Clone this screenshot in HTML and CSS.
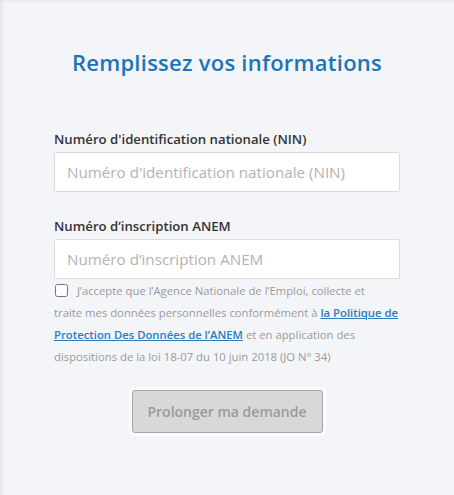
FILE: index.html
```html
<!DOCTYPE html>
<html lang="fr">
<head>
<meta charset="utf-8">
<title>Remplissez vos informations</title>
<link rel="stylesheet" href="styles.css">
</head>
<body>
<div class="page">
  <h1 class="title">Remplissez vos informations</h1>
  <form class="form">
    <div class="field">
      <label class="label" for="nin">Numéro d'identification nationale (NIN)</label>
      <input class="input" id="nin" type="text" placeholder="Numéro d'identification nationale (NIN)">
    </div>
    <div class="field">
      <label class="label" for="anem">Numéro d’inscription ANEM</label>
      <input class="input" id="anem" type="text" placeholder="Numéro d’inscription ANEM">
    </div>
    <p class="consent"><input class="check" type="checkbox"> J’accepte que l’Agence Nationale de l’Emploi, collecte et<br>traite mes données personnelles conformément à <a class="link" href="#">la Politique de<br>Protection Des Données de l’ANEM</a> et en application des<br>dispositions de la loi 18-07 du 10 juin 2018 (JO N° 34)</p>
    <div class="actions">
      <button class="btn" type="button" disabled>Prolonger ma demande</button>
    </div>
  </form>
</div>
</body>
</html>
```
FILE: styles.css
```css
html, body {
  margin: 0;
  padding: 0;
  height: 100%;
}
body {
  background: #f4f5f9;
  font-family: "Open Sans", "Noto Sans", sans-serif;
}
.page {
  min-height: 100%;
  box-sizing: border-box;
  padding: 40px 54px 0 54px;
  box-shadow: inset 4px 3px 4px -2px rgba(0,0,0,0.08);
}
.title {
  margin: 0;
  text-align: center;
  font-size: 22px;
  font-weight: 600;
  color: #1b74b9;
  line-height: 44px;
  letter-spacing: 0.25px;
}
.form {
  margin-top: 46px;
}
.field {
  display: flex;
  flex-direction: column;
  margin-bottom: 25px;
}
.label {
  font-size: 13.2px;
  font-weight: 600;
  color: #333;
  line-height: 18px;
  margin-bottom: 4px;
}
.input {
  height: 40px;
  box-sizing: border-box;
  border: 1px solid #dcdcdc;
  border-radius: 2px;
  background: #fff;
  padding: 0 12px;
  font-family: inherit;
  font-size: 15.2px;
  color: #555;
  outline: none;
}
.input::placeholder {
  color: #b3b3b3;
}
.field:nth-child(2) {
  margin-bottom: 1px;
}
.consent {
  margin: 0;
  font-size: 11.3px;
  line-height: 22px;
  color: #9a9a9a;
  white-space: nowrap;
}
.check {
  width: 13px;
  height: 13px;
  margin: 0 6px 0 1px;
  vertical-align: -2px;
}
.link {
  color: #2b7cc0;
  font-weight: 600;
  text-decoration: underline;
}
.actions {
  display: flex;
  justify-content: center;
  margin-top: 22px;
}
.btn {
  width: 191px;
  height: 43px;
  background: #d8d8d8;
  border: 1px solid #a6a6a6;
  border-radius: 3px;
  box-shadow: 0 0 0 3px #fbfbfd;
  font-family: inherit;
  font-size: 14px;
  font-weight: 600;
  color: #9b9b9b;
}
```
